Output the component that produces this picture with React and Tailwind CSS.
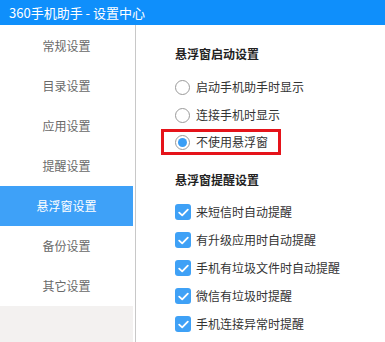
import React, { useState } from "react";

const menu = ["常规设置", "目录设置", "应用设置", "提醒设置", "悬浮窗设置", "备份设置", "其它设置"];

const radios = ["启动手机助手时显示", "连接手机时显示", "不使用悬浮窗"];

const checks = [
  "来短信时自动提醒",
  "有升级应用时自动提醒",
  "手机有垃圾文件时自动提醒",
  "微信有垃圾时提醒",
  "手机连接异常时提醒",
];

const Radio = ({ checked }) => (
  <span className="w-[15px] h-[15px] rounded-full border border-[#9a9a9a] bg-white flex items-center justify-center shrink-0">
    {checked && <span className="w-[9px] h-[9px] rounded-full bg-[#3a9ef5]" />}
  </span>
);

const Check = () => (
  <span className="w-[16px] h-[16px] rounded-[3px] bg-[#3fa1f6] flex items-center justify-center shrink-0">
    <svg width="11" height="9" viewBox="0 0 11 9" fill="none">
      <path d="M1.2 4.6 L4.2 7.4 L9.8 1.6" stroke="#fff" strokeWidth="1.8" strokeLinecap="round" strokeLinejoin="round" />
    </svg>
  </span>
);

const App = () => {
  const [active] = useState(4);

  return (
    <div className="w-[385px] h-[342px] bg-white flex flex-col overflow-hidden font-['Microsoft_YaHei','Noto_Sans_CJK_SC',sans-serif] text-[12px]">
      {/* Title bar */}
      <div className="h-[25px] bg-[#0f8ffb] text-white text-[13px] flex items-center pl-[9px] shrink-0">
        360手机助手 - 设置中心
      </div>

      <div className="flex flex-1">
        {/* Sidebar */}
        <div className="w-[136px] flex shrink-0 border-r border-[#c8c8c8]">
          <div className="w-[133px] flex flex-col pt-[1px]">
            {menu.map((m, i) => (
              <div
                key={m}
                className={
                  i === active
                    ? "h-[40px] flex items-center justify-center bg-[#3ea1f8] text-white"
                    : "h-[40px] flex items-center justify-center text-[#6a6a6a]"
                }
              >
                {m}
              </div>
            ))}
            <div className="flex-1 bg-[#f3f1f0]" />
          </div>
        </div>

        {/* Content */}
        <div className="flex-1 flex flex-col pl-[39px] pt-[20px] text-[#333]">
          <div className="font-bold text-[#222] h-[17px] flex items-center">悬浮窗启动设置</div>
          <div className="flex flex-col mt-[11px] -ml-[14px]">
            {radios.map((r, i) => (
              <div
                key={r}
                className={
                  i === 2
                    ? "h-[26px] w-[120px] flex items-center gap-[6px] pl-[11px] border-[3px] border-[#e5131a]"
                    : "h-[28px] flex items-center gap-[6px] pl-[14px]"
                }
              >
                <Radio checked={i === 2} />
                <span>{r}</span>
              </div>
            ))}
          </div>

          <div className="font-bold text-[#222] h-[17px] flex items-center mt-[16px]">悬浮窗提醒设置</div>
          <div className="flex flex-col mt-[10px]">
            {checks.map((c) => (
              <div key={c} className="h-[28px] flex items-center gap-[5px]">
                <Check />
                <span>{c}</span>
              </div>
            ))}
          </div>
        </div>
      </div>
    </div>
  );
};

export default App;
